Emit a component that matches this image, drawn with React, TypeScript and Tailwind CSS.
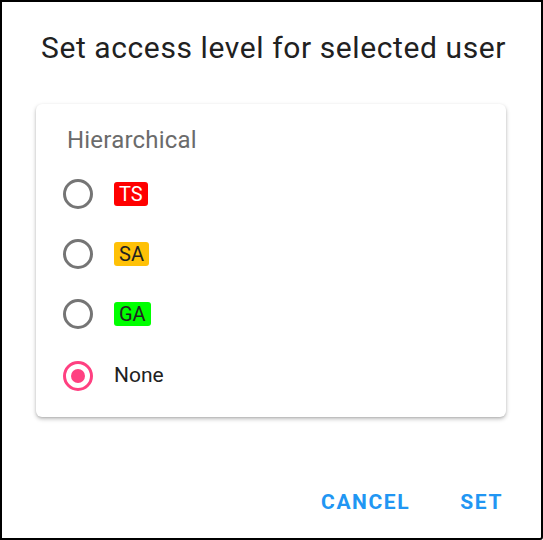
import React, { useState } from "react";

const levels = [
  { id: "TS", label: "TS", className: "bg-[#ff0000] text-white" },
  { id: "SA", label: "SA", className: "bg-[#ffc107] text-[#222]" },
  { id: "GA", label: "GA", className: "bg-[#00ff00] text-[#222]" },
];

function Radio({ checked }: { checked: boolean }) {
  return (
    <span
      className={`flex h-[30px] w-[30px] items-center justify-center rounded-full border-[3px] ${
        checked ? "border-[#ff4081]" : "border-[#757575]"
      }`}
    >
      {checked && <span className="h-[14px] w-[14px] rounded-full bg-[#ff4081]" />}
    </span>
  );
}

export default function App() {
  const [value, setValue] = useState("none");

  return (
    <div
      className="flex h-[540px] w-[543px] flex-col rounded-br-[3px] border-2 border-black bg-white text-[#212121]"
      style={{ fontFamily: "Roboto, 'Noto Sans', sans-serif" }}
    >
      {/* Title */}
      <h2 className="pl-[4px] pt-[28px] text-center text-[30px] leading-[36px] tracking-[0.6px]">
        Set access level for selected user
      </h2>

      {/* Options card */}
      <div className="ml-[34px] mr-[35px] mt-[38px] rounded-md bg-white pb-[11px] pl-[25px] pt-[21px] shadow-[0_2px_4px_rgba(0,0,0,0.25),0_1px_2px_rgba(0,0,0,0.1)]">
        <div className="mb-[9px] pl-[6px] text-[24px] leading-[30px] tracking-[0.2px] text-[#6b6b6b]">
          Hierarchical
        </div>
        <div className="flex flex-col">
          {levels.map((l) => (
            <button
              key={l.id}
              onClick={() => setValue(l.id)}
              className="flex h-[60px] items-center gap-[21px] pl-[2px] text-left"
            >
              <Radio checked={value === l.id} />
              <span className={`rounded-[3px] px-[5px] text-[20px] leading-[24px] ${l.className}`}>
                {l.label}
              </span>
            </button>
          ))}
          <button
            onClick={() => setValue("none")}
            className="mt-[2px] flex h-[60px] items-center gap-[21px] pl-[2px] text-left"
          >
            <Radio checked={value === "none"} />
            <span className="text-[21px] text-[#212121]">None</span>
          </button>
        </div>
      </div>

      {/* Actions */}
      <div className="mt-auto flex justify-end gap-[50px] pb-[20px] pr-[38px]">
        <button className="text-[21px] font-bold tracking-[1.6px] text-[#2196f3]">CANCEL</button>
        <button className="text-[21px] font-bold tracking-[1.6px] text-[#2196f3]">SET</button>
      </div>
    </div>
  );
}
